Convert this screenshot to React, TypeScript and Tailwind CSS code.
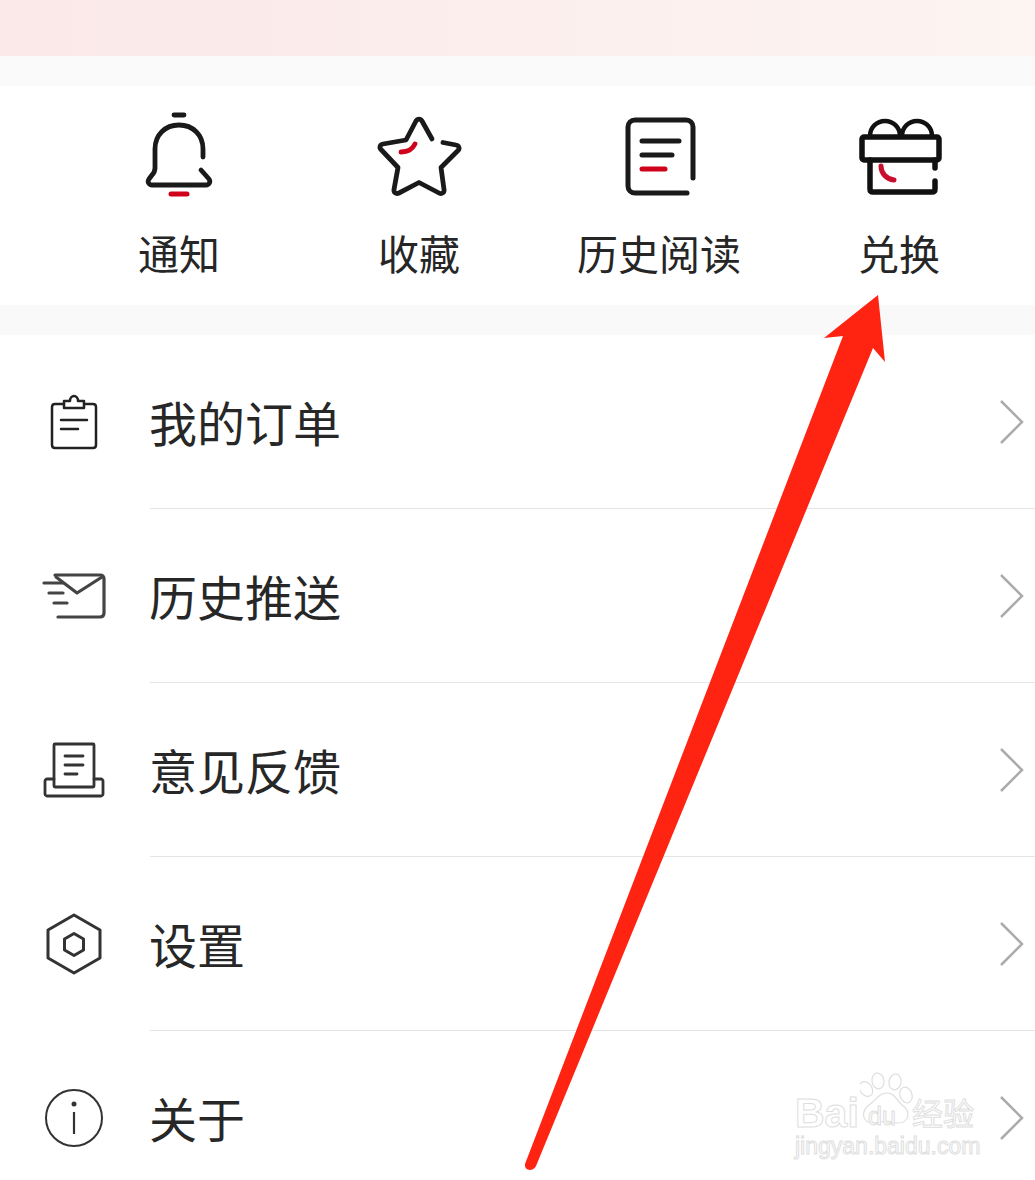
const FONT = "font-['Noto_Sans_CJK_SC','Noto_Sans_CJK_JP',sans-serif]";
const RED = '#d0021b';

// Every icon's viewBox uses page coordinates, which keeps the paths easy to compare.
function Bell() {
  return (
    <g fill="none" stroke="#1a1a1a" strokeWidth="4.8" strokeLinecap="round" strokeLinejoin="round">
      <path d="M174 115h10" />
      <path d="M203 157v-8c0-14-10-24-24-24s-24 10-24 24v19c0 3-1 5-3 7l-3 4c-2 3 0 6 3 6h54c3 0 5-3 3-6l-8-9" />
      <path d="M171 194h16" stroke={RED} strokeWidth="5" />
    </g>
  );
}

function Star() {
  return (
    <g fill="none" stroke="#1a1a1a" strokeWidth="4.8" strokeLinecap="round" strokeLinejoin="round">
      <path d="M432 139l-10-18c-1.500-2.500-4.500-2.500-6 0l-10 19-23 4c-3 .5-4 3.500-2 5.500l17 18-4 22c-.5 3 2 5 5 3.500l20-10.500 20 10.500c3 1.500 5.500-.5 5-3.500l-3-22 17-17c2-2 1-5-2-5.500l-13-2.500" />
      <path d="M401 152c7-.5 11-2 14-8" stroke={RED} />
    </g>
  );
}

function Doc() {
  return (
    <g fill="none" stroke="#1a1a1a" strokeWidth="5" strokeLinecap="round" strokeLinejoin="round">
      <path d="M693 178v-51c0-4-3-7-7-7h-51c-4 0-7 3-7 7v59c0 4 3 7 7 7h52" />
      <path d="M642 141h37M642 155h30" />
      <path d="M642 169h23" stroke={RED} />
    </g>
  );
}

function Gift() {
  return (
    <g fill="none" stroke="#111" strokeWidth="5.5" strokeLinecap="round" strokeLinejoin="round">
      <rect x="862" y="137" width="77" height="23" rx="2" />
      <path d="M870 136c0-9 7-15 15-15s15 6 15 15M902 136c0-9 7-15 15-15s15 6 15 15" strokeWidth="4.5" />
      <path d="M870 160v29c0 2 1 3 3 3h59c2 0 3-1 3-3v-8M935 160v8" />
      <path d="M881 166c0 7 5 13 13 14" stroke="#c8102e" strokeWidth="5" />
    </g>
  );
}

function Clipboard() {
  return (
    <g fill="none" stroke="#222" strokeWidth="2.5" strokeLinecap="round" strokeLinejoin="round">
      <path d="M64 404h-9c-2 0-3 1-3 3v38c0 2 1 3 3 3h38c2 0 3-1 3-3v-38c0-2-1-3-3-3h-9" />
      <path d="M64 408v-7h6c0-3 2-5 4-5s4 2 4 5h6v7z" />
      <path d="M61 420h26M61 429h17" />
    </g>
  );
}

function Mail() {
  return (
    <g fill="none" stroke="#444" strokeWidth="3.2" strokeLinecap="round" strokeLinejoin="round">
      <path d="M55 575h45c3 0 4 2 4 4v34c0 3-2 4-4 4h-42" />
      <path d="M56 577l21 16 25-16" />
      <path d="M44 583h19M49 593h14M54 603h13" />
    </g>
  );
}

function Feedback() {
  return (
    <g fill="none" stroke="#333" strokeWidth="2.8" strokeLinecap="round" strokeLinejoin="round">
      <rect x="54" y="744" width="40" height="43" rx="1" />
      <path d="M54 779h-7c-1 0-2 1-2 2v13c0 1 1 2 2 2h54c1 0 2-1 2-2v-13c0-1-1-2-2-2h-7" />
      <path d="M65 756h18M65 765h18M65 774h12" />
    </g>
  );
}

function Hexagon() {
  return (
    <g fill="none" stroke="#333" strokeWidth="3" strokeLinejoin="round">
      <path d="M74 915l26 15v28l-26 15-26-15v-28z" />
      <path d="M74 933.500l9.500 5.500v11l-9.500 5.500-9.500-5.500v-11z" />
    </g>
  );
}

function Info() {
  return (
    <g fill="none" stroke="#333" strokeWidth="2">
      <circle cx="74" cy="1118" r="28" />
      <path d="M74 1112v22" strokeWidth="2.200" />
      <circle cx="74" cy="1104" r="2.500" fill="#333" stroke="none" />
    </g>
  );
}

const SHORTCUTS = [
  { label: '通知', box: '139 105 80 100', icon: <Bell /> },
  { label: '收藏', box: '379 105 80 100', icon: <Star /> },
  { label: '历史阅读', box: '619 105 80 100', icon: <Doc /> },
  { label: '兑换', box: '859 105 80 100', icon: <Gift /> },
];

const ROWS = [
  { label: '我的订单', top: 335, icon: <Clipboard /> },
  { label: '历史推送', top: 509, icon: <Mail /> },
  { label: '意见反馈', top: 683, icon: <Feedback /> },
  { label: '设置', top: 857, icon: <Hexagon /> },
  { label: '关于', top: 1031, icon: <Info /> },
];

function Chevron() {
  return (
    <svg viewBox="0 0 26 46" className="w-[26px] h-[46px]" fill="none" stroke="#ababab" strokeWidth="2.500">
      <path d="M2 2l21 21L2 44" />
    </svg>
  );
}

function MenuRow({ label, top, icon, last }: { label: string; top: number; icon: React.ReactNode; last: boolean }) {
  return (
    <div className="flex items-center h-[174px]">
      <svg viewBox={`0 ${top} 150 174`} className="w-[150px] h-[174px] shrink-0">
        {icon}
      </svg>
      <div className={`flex-1 self-stretch flex items-center justify-between pr-[10px] border-b ${last ? 'border-transparent' : 'border-[#e4e4e4]'}`}>
        <span className="text-[48px] leading-none text-[#272727] pb-[2px] -ml-[1px]">{label}</span>
        <Chevron />
      </div>
    </div>
  );
}

function Watermark() {
  return (
    <div className="absolute left-[794px] top-[1068px] w-[190px] h-[92px] font-['Liberation_Sans',sans-serif] select-none">
      <svg viewBox="860 1072 55 55" className="absolute left-[66px] top-[4px] w-[55px] h-[55px]" fill="#fff" stroke="#dedede" strokeWidth="1.200">
        <ellipse cx="866" cy="1089" rx="6" ry="8" transform="rotate(-35 866 1089)" />
        <ellipse cx="878" cy="1081" rx="6" ry="8" transform="rotate(-10 878 1081)" />
        <ellipse cx="895" cy="1082" rx="6" ry="8" transform="rotate(10 895 1082)" />
        <ellipse cx="906" cy="1095" rx="6" ry="8" transform="rotate(-20 906 1095)" />
        <path d="M887 1093c8 0 9 7 15 12 9 6 8 18-5 18-4 0-7-2-11-2s-8 2-12 2c-13 0-13-12-5-18 7-4 9-12 18-12z" />
      </svg>
      <span className="absolute left-[1px] top-[25px] text-[41px] leading-none font-bold text-white [-webkit-text-stroke:1px_#dedede]">Bai</span>
      <span className="absolute left-[74px] top-[36px] text-[25px] leading-none text-white [-webkit-text-stroke:1px_#dedede]">du</span>
      <span className={`absolute left-[118px] top-[28px] text-[31px] leading-none text-white [-webkit-text-stroke:1px_#dedede] ${FONT}`}>经验</span>
      <span className="absolute left-[1px] top-[67px] text-[23px] leading-none whitespace-nowrap text-white [-webkit-text-stroke:1px_#dedede]">jingyan.baidu.com</span>
    </div>
  );
}

export default function App() {
  return (
    <div className={`relative w-[1035px] h-[1180px] overflow-hidden bg-white ${FONT}`}>
      <div className="h-[56px] bg-gradient-to-r from-[#fae9e8] via-[#fbeeec] to-[#fdf5f2]" />
      <div className="h-[30px] bg-[#fafafa]" />

      <div className="h-[219px] grid grid-cols-[repeat(4,240px)] pl-[59px] pt-[19px]">
        {SHORTCUTS.map((s) => (
          <div key={s.label} className="flex flex-col items-center">
            <svg viewBox={s.box} className="w-[80px] h-[100px] overflow-visible">
              {s.icon}
            </svg>
            <span className="mt-[27px] text-[41px] leading-none text-[#262626]">{s.label}</span>
          </div>
        ))}
      </div>

      <div className="h-[30px] bg-[#f9f9f9]" />

      {ROWS.map((r, i) => (
        <MenuRow key={r.label} label={r.label} top={r.top} icon={r.icon} last={i === ROWS.length - 1} />
      ))}

      <Watermark />

      {/* annotation arrow painted over the screenshot */}
      <svg viewBox="0 0 1035 1180" className="absolute inset-0 w-[1035px] h-[1180px] pointer-events-none">
        <path
          d="M878 295L885 362L873 348L536 1166C533 1172 524 1171 525 1164L843 336L824 338Z"
          fill="#ff2312"
        />
      </svg>
    </div>
  );
}
